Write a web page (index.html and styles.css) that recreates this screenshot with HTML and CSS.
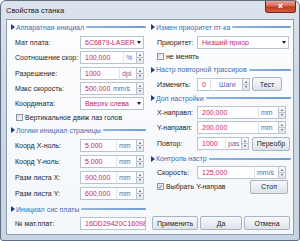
FILE: index.html
```html
<!DOCTYPE html>
<html>
<head>
<meta charset="utf-8">
<link rel="stylesheet" href="styles.css">
</head>
<body>
<div class="window">
  <div class="titlebar">
    <span class="title">Свойства станка</span>
    <span class="close">x</span>
  </div>
  <div class="client">
    <div class="cols">
      <div class="col left">
        <div class="sec h14"><span class="tri"></span><span class="sec-t">Аппаратная инициал</span><span class="sec-l"></span></div>
        <div class="row h16"><span class="lbl">Мат плата:</span><div class="combo"><span class="val">6C6879-LASER</span><span class="dd"></span></div></div>
        <div class="row h15"><span class="lbl">Соотношение скор:</span><div class="field"><span class="inp" style="width:43px"><span class="val">100,000</span></span><span class="unit u-purple" style="width:13px">%</span><span class="spin"></span></div></div>
        <div class="row h16"><span class="lbl">Разрешение:</span><div class="field"><span class="inp" style="width:39px"><span class="val">1000</span></span><span class="unit u-purple" style="width:17px">dpi</span><span class="spin"></span></div></div>
        <div class="row h15"><span class="lbl">Макс скорость:</span><div class="field"><span class="inp" style="width:30px"><span class="val">500,000</span></span><span class="unit u-purple" style="width:26px">mm/s</span><span class="spin"></span></div></div>
        <div class="row h15"><span class="lbl">Координата:</span><div class="combo"><span class="val">Вверху слева</span><span class="dd"></span></div></div>
        <div class="chk-row h12"><span class="chk"></span><span>Вертикальное движ лаз голов</span></div>
        <div class="sec h14"><span class="tri"></span><span class="sec-t">Логики инициал страницы</span><span class="sec-l"></span></div>
        <div class="row h16"><span class="lbl">Коорд X-ноль:</span><div class="field"><span class="inp" style="width:36px"><span class="val">5,000</span></span><span class="unit" style="width:20px">mm</span><span class="spin"></span></div></div>
        <div class="row h16"><span class="lbl">Коорд Y-ноль:</span><div class="field"><span class="inp" style="width:36px"><span class="val">5,000</span></span><span class="unit" style="width:20px">mm</span><span class="spin"></span></div></div>
        <div class="row h16"><span class="lbl">Разм листа X:</span><div class="field"><span class="inp" style="width:36px"><span class="val">900,000</span></span><span class="unit" style="width:20px">mm</span><span class="spin"></span></div></div>
        <div class="row h17"><span class="lbl">Разм листа Y:</span><div class="field"><span class="inp" style="width:36px"><span class="val">600,000</span></span><span class="unit" style="width:20px">mm</span><span class="spin"></span></div></div>
        <div class="sec h14"><span class="tri"></span><span class="sec-t">Инициал сис платы</span><span class="sec-l"></span></div>
        <div class="row h14"><span class="lbl">№ мат.плат:</span><div class="field"><span class="inp full"><span class="val">16DD29420C16098</span></span></div></div>
      </div>
      <div class="col right">
        <div class="sec h14"><span class="tri"></span><span class="sec-t">Измен приоритет пт-ка</span><span class="sec-l"></span></div>
        <div class="row h16"><span class="lbl">Приоритет:</span><div class="combo wide"><span class="val">Низший приор</span><span class="dd"></span></div></div>
        <div class="chk-row h12"><span class="chk"></span><span>не менять</span></div>
        <div class="sec h15"><span class="tri"></span><span class="sec-t">Настр повторной трассиров</span><span class="sec-l"></span></div>
        <div class="row h14"><span class="lbl">Изменить:</span><div class="field"><span class="inp" style="width:13px"><span class="val">0</span></span><span class="unit u-gap" style="width:32px">Шаги</span><span class="spin"></span><span class="btn b-test">Тест</span></div></div>
        <div class="sec h14"><span class="tri"></span><span class="sec-t">Доп настройки</span><span class="sec-l"></span></div>
        <div class="row h15"><span class="lbl">X-направл:</span><div class="field"><span class="inp" style="width:61px"><span class="val">200,000</span></span><span class="unit" style="width:20px">mm</span><span class="spin"></span></div></div>
        <div class="row h15"><span class="lbl">Y-направл:</span><div class="field"><span class="inp" style="width:61px"><span class="val">200,000</span></span><span class="unit" style="width:20px">mm</span><span class="spin"></span></div></div>
        <div class="row h17"><span class="lbl">Повтор:</span><div class="field"><span class="inp" style="width:28px"><span class="val">1000</span></span><span class="unit u-purple" style="width:16px">pas</span><span class="spin"></span><span class="btn b-re">Переобр</span></div></div>
        <div class="sec h13"><span class="tri"></span><span class="sec-t">Контроль настр</span><span class="sec-l"></span></div>
        <div class="row h14"><span class="lbl">Скорость:</span><div class="field"><span class="inp" style="width:57px"><span class="val">125,000</span></span><span class="unit u-purple" style="width:24px">mm/s</span><span class="spin"></span></div></div>
        <div class="chk-row h15"><span class="chk on">✓</span><span>Выбрать Y-направ</span><span class="btn b-stop">Стоп</span></div>
        <div class="bottom">
          <span class="btn bb w46">Применить</span>
          <span class="btn bb w42">Да</span>
          <span class="btn bb w46">Отмена</span>
        </div>
      </div>
    </div>
  </div>
</div>
</body>
</html>
```

FILE: styles.css
```css
* { box-sizing: border-box; }
html, body { margin: 0; padding: 0; }
body {
  width: 300px;
  height: 241px;
  overflow: hidden;
  background: #ffffff;
  font-family: "Liberation Sans", Arial, sans-serif;
  font-size: 7px;
  color: #1e1e1e;
}
.window {
  width: 300px;
  height: 241px;
  border: 1px solid #5f6d80;
  border-radius: 6px 6px 3px 3px;
  background: linear-gradient(180deg, #dde3ec 0%, #cfd9e6 30%, #c8d4e3 100%);
  display: flex;
  flex-direction: column;
  padding: 0 5px 5px 5px;
}
.titlebar {
  height: 18px;
  display: flex;
  align-items: flex-start;
}
.title {
  font-size: 7.5px;
  color: #1a1a1a;
  padding-top: 5px;
  padding-left: 0;
}
.close {
  margin-left: auto;
  margin-right: -2px;
  width: 31px;
  height: 12px;
  border: 1px solid #6e2a22;
  border-top: none;
  border-radius: 0 0 3px 3px;
  background: linear-gradient(180deg, #e9a396 0%, #d66a55 45%, #c13a20 55%, #d45d3e 100%);
  color: #fff;
  font-family: "DejaVu Sans", sans-serif;
  font-weight: bold;
  font-size: 7.5px;
  line-height: 10px;
  text-align: center;
}
.client {
  flex: 1;
  border: 1px solid #8d9db2;
  background: linear-gradient(180deg, #fcfdfe 0%, #f4f7fb 100%);
  padding: 0 2px 0 4px;
}
.cols {
  display: grid;
  grid-template-columns: 135px 140px;
  column-gap: 5px;
}
.col { display: flex; flex-direction: column; }
.h12 { height: 12px; }
.h13 { height: 13px; }
.h14 { height: 14px; }
.h15 { height: 15px; }
.h16 { height: 16px; }
.h17 { height: 17px; }
.sec {
  display: flex;
  align-items: center;
  flex: none;
}
.tri {
  width: 0; height: 0;
  border-top: 3px solid transparent;
  border-bottom: 3px solid transparent;
  border-left: 4px solid #1c3d8c;
  margin-right: 1px;
  flex: none;
}
.sec-t { color: #3b6db3; white-space: nowrap; }
.sec-l {
  flex: 1;
  height: 2px;
  background: linear-gradient(90deg, #8fb6de, #6f9dcd);
  margin-left: 2px;
  border-radius: 1px;
}
.row {
  display: flex;
  align-items: center;
  padding-left: 4px;
  flex: none;
}
.right .row { padding-left: 6px; }
.lbl { width: 65px; flex: none; white-space: nowrap; }
.right .lbl { width: 40px; }
.combo {
  width: 64px;
  height: 13px;
  border: 1px solid #bac3ce;
  background: #fff;
  display: flex;
  align-items: center;
  padding-left: 4px;
  overflow: hidden;
}
.combo.wide { width: 92px; }
.combo .val { flex: 1; overflow: hidden; white-space: nowrap; }
.dd {
  width: 0; height: 0;
  border-left: 2.5px solid transparent;
  border-right: 2.5px solid transparent;
  border-top: 3px solid #1e1e1e;
  margin: 0 2px 0 1px;
  flex: none;
}
.val { color: #c6266b; white-space: nowrap; }
.field { display: flex; align-items: center; height: 13px; }
.inp {
  height: 13px;
  border: 1px solid #bac3ce;
  border-right: none;
  background: #fff;
  display: flex;
  align-items: center;
  padding-left: 4px;
  overflow: hidden;
  flex: none;
}
.inp.full { width: 66px; border-right: 1px solid #bac3ce; }
.unit {
  height: 13px;
  border: 1px solid #bac3ce;
  border-left: 1px solid #dfe4ea;
  border-right: none;
  background: #fff;
  color: #6f6688;
  display: flex;
  align-items: center;
  padding-left: 2px;
  white-space: nowrap;
  overflow: hidden;
  flex: none;
}
.u-purple { color: #6a5ea8; }
.u-gap { padding-left: 8px; color: #6a5ea8; }
.spin {
  width: 8px;
  height: 13px;
  border: 1px solid #bac3ce;
  background:
    linear-gradient(#bac3ce, #bac3ce) 0 5px / 100% 1px no-repeat,
    linear-gradient(180deg, #f5f7fa, #e2e7ee);
  position: relative;
  flex: none;
}
.spin::before, .spin::after {
  content: "";
  position: absolute;
  left: 1.5px;
  width: 0; height: 0;
  border-left: 1.5px solid transparent;
  border-right: 1.5px solid transparent;
}
.spin::before { top: 2px; border-bottom: 2px solid #555; }
.spin::after { bottom: 2px; border-top: 2px solid #555; }
.chk-row {
  display: flex;
  align-items: center;
  padding-left: 5px;
  white-space: nowrap;
  flex: none;
}
.right .chk-row { padding-left: 6px; }
.chk {
  width: 7px; height: 7px;
  border: 1px solid #8f97a3;
  background: linear-gradient(135deg, #d9dee5, #fbfbfc);
  margin-right: 2px;
  flex: none;
  font-size: 6px;
  line-height: 5px;
  text-align: center;
  color: #23386a;
  font-family: "DejaVu Sans", sans-serif;
}
.btn {
  display: flex;
  align-items: center;
  justify-content: center;
  height: 14px;
  border: 1px solid #a9b4c2;
  border-radius: 2px;
  background: linear-gradient(180deg, #f6f8fa 0%, #ebeef2 50%, #dde2e9 100%);
  color: #1e1e1e;
  white-space: nowrap;
  flex: none;
}
.b-test { width: 30px; margin-left: 2px; }
.b-re { width: 38px; margin-left: 3px; }
.b-stop { width: 38px; margin-left: auto; margin-right: 3px; }
.bottom {
  display: flex;
  margin-top: 22px;
  gap: 2px;
  margin-left: 1px;
}
.bb { height: 14px; }
.w46 { width: 46px; }
.w42 { width: 42px; }
```
